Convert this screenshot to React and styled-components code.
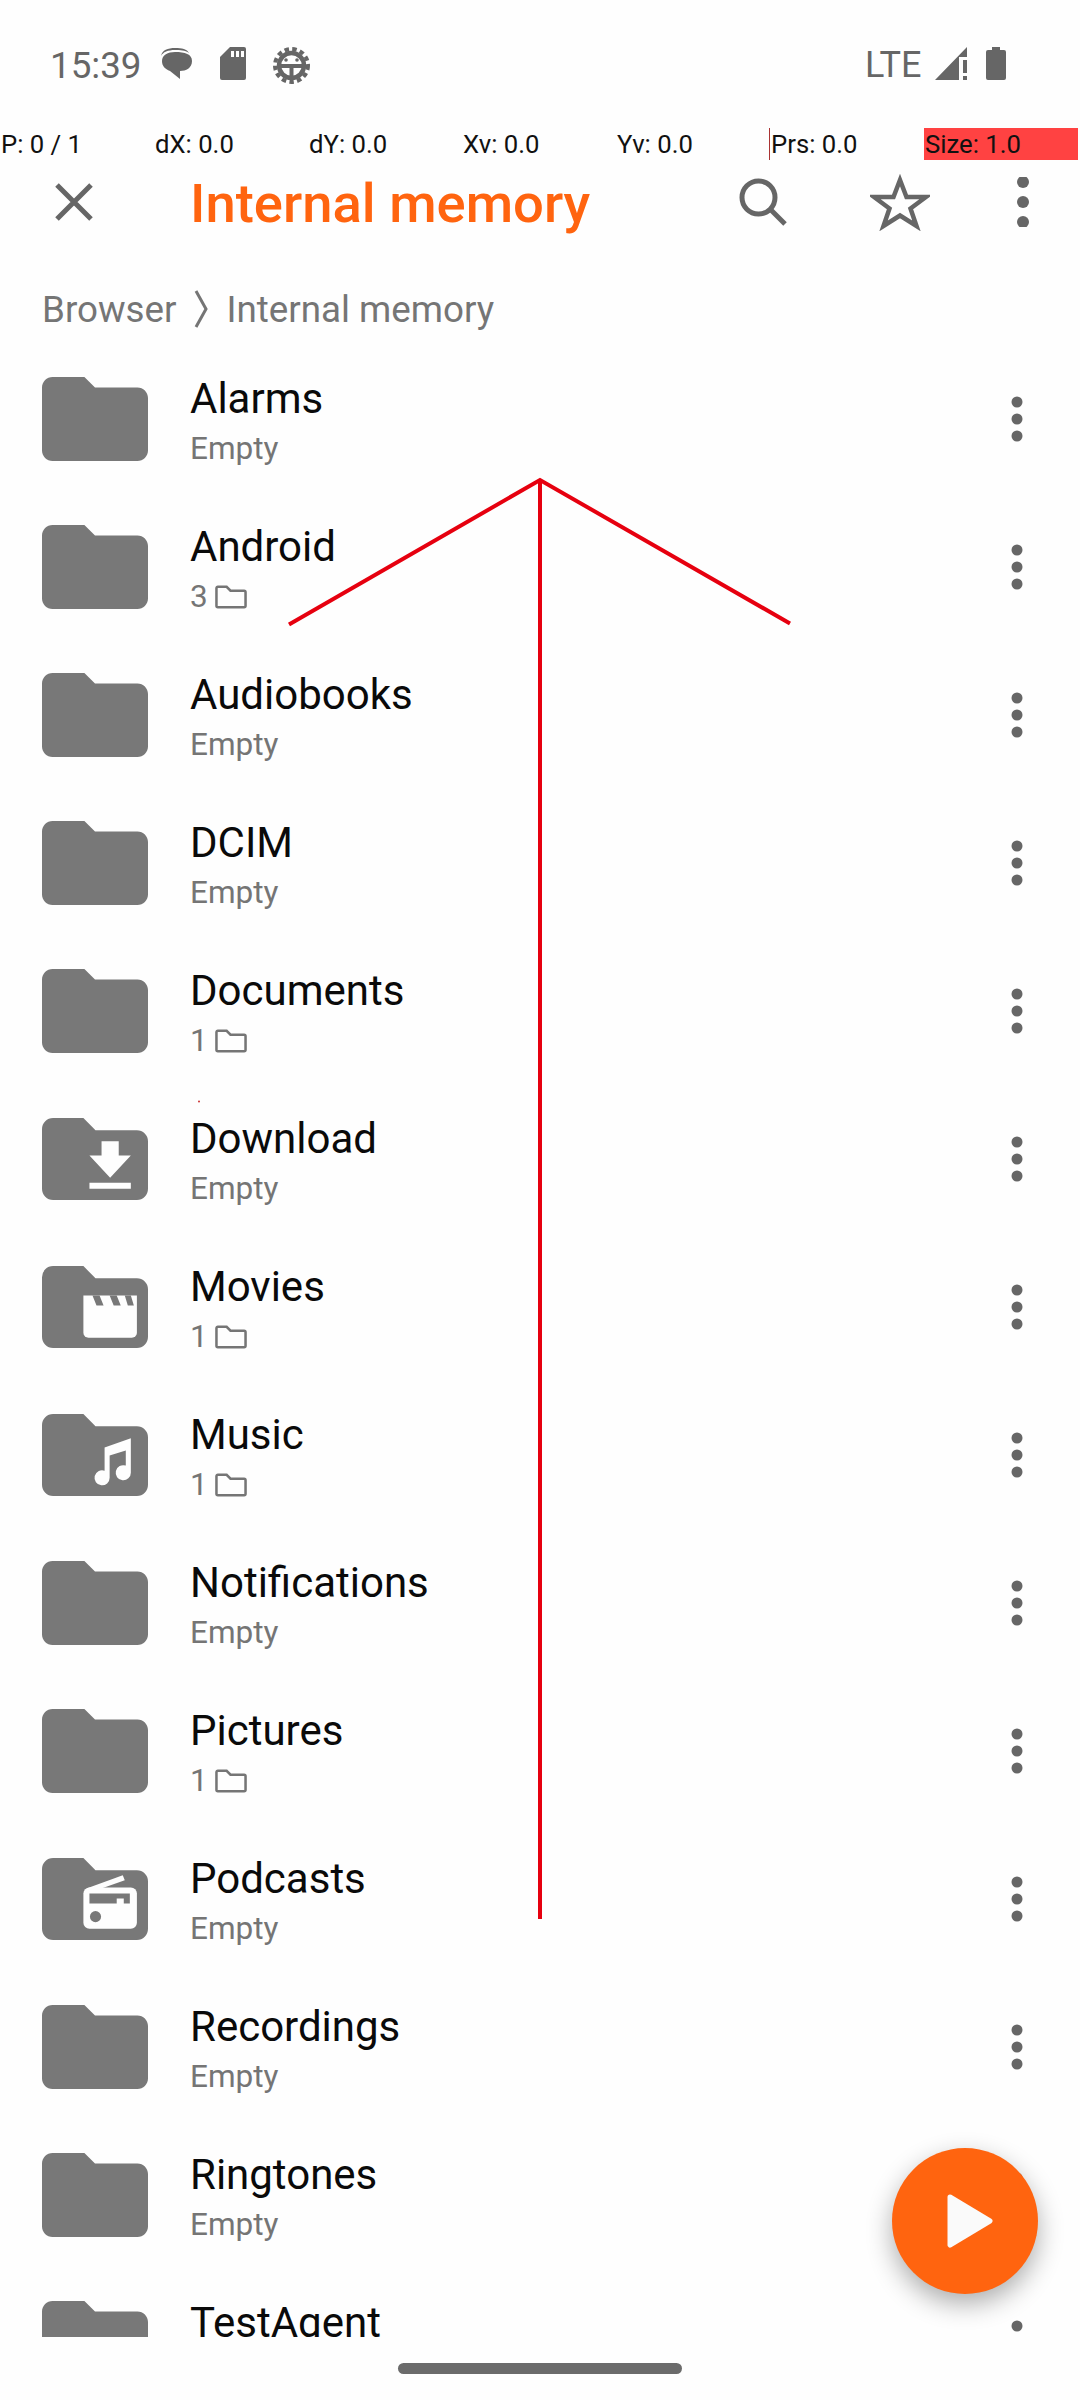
import React from 'react';
import styled, { createGlobalStyle } from 'styled-components';

const GRAY = '#757575';
const ICON = '#666666';
const ORANGE = '#ff640f';

const Global = createGlobalStyle`
    html, body { margin: 0; padding: 0; background: #fefefe; }
    * { box-sizing: border-box; }
`;

const Screen = styled.div`
    position: relative;
    width: 1080px;
    height: 2400px;
    overflow: hidden;
    background: #fefefe;
    font-family: Roboto, "Liberation Sans", sans-serif;
`;

const StatusBar = styled.div`
    height: 128px;
    display: flex;
    align-items: flex-start;
    padding: 47px 74px 0 50px;
    color: ${ICON};
`;

const Time = styled.div`
    font-size: 36.75px;
    line-height: 38px;
    width: 110px;
`;

const StatusIcon = styled.svg`
    display: block;
    margin-right: ${({ $gap }) => $gap || 0}px;
    flex: none;
`;

const Spacer = styled.div`
    flex: 1;
`;

const Lte = styled.div`
    font-size: 36px;
    line-height: 36px;
    width: 70px;
`;

const PointerBar = styled.div`
    position: absolute;
    top: 128px;
    left: 0;
    width: 1080px;
    height: 32px;
    display: flex;
`;

const PointerCell = styled.div`
    width: 154px;
    height: 32px;
    padding-left: 1px;
    font-size: 25.7px;
    line-height: 32px;
    color: #111;
    white-space: nowrap;
    background: ${({ $alert }) => ($alert ? '#ff4242' : 'transparent')};
`;

const Toolbar = styled.div`
    height: 148px;
    display: flex;
    align-items: center;
    position: relative;
`;

const CloseButton = styled.div`
    width: 190px;
    padding-left: 55px;
    display: flex;
`;

const Title = styled.div`
    flex: 1;
    padding-top: 2px;
    font-size: 54.4px;
    font-weight: 500;
    color: ${ORANGE};
    white-space: nowrap;
`;

const ToolIcon = styled.svg`
    display: block;
    flex: none;
    margin-right: ${({ $gap }) => $gap}px;
`;

const Breadcrumb = styled.div`
    height: 69px;
    display: flex;
    align-items: center;
    padding-left: 42px;
    padding-bottom: 3px;
    font-size: 36.75px;
    color: ${GRAY};
`;

const Chevron = styled.svg`
    display: block;
    margin: 0 18px 0 18px;
`;

const ListArea = styled.div`
    position: relative;
    height: 1992px;
    overflow: hidden;
`;

const Row = styled.div`
    height: 148px;
    display: flex;
    align-items: center;
    padding-left: 42px;
`;

const IconSlot = styled.div`
    width: 148px;
    flex: none;
`;

const RowText = styled.div`
    flex: 1;
    display: flex;
    flex-direction: column;
    height: 100%;
    padding-top: 28px;
`;

const RowTitle = styled.div`
    font-size: 42px;
    line-height: 52px;
    color: #0a0a0a;
`;

const RowSub = styled.div`
    display: flex;
    align-items: center;
    gap: 7px;
    margin-top: 2px;
    font-size: 31.5px;
    line-height: 44px;
    color: ${GRAY};
`;

const MoreIcon = styled.svg`
    display: block;
    flex: none;
    margin-right: ${({ $right }) => $right}px;
`;

const Fab = styled.div`
    position: absolute;
    left: 892px;
    top: 1803px;
    width: 146px;
    height: 146px;
    padding-left: 10px;
    border-radius: 50%;
    background: ${ORANGE};
    box-shadow: 0 10px 26px rgba(0, 0, 0, 0.32);
    display: flex;
    align-items: center;
    justify-content: center;
`;

const NavArea = styled.div`
    height: 63px;
    display: flex;
    justify-content: center;
    padding-top: 26px;
`;

const NavPill = styled.div`
    width: 284px;
    height: 11px;
    border-radius: 6px;
    background: #6b6b6b;
`;

const TraceLayer = styled.svg`
    position: absolute;
    left: 0;
    top: 0;
    pointer-events: none;
`;

const GlyphSvg = styled.svg`
    display: block;
`;

const FolderBody = ({ children }) => (
    <GlyphSvg width="106" height="82" viewBox="0 0 105 81">
        <path d="M11 0H41L53 12H94A11 11 0 0 1 105 23V70A11 11 0 0 1 94 81H11A11 11 0 0 1 0 70V11A11 11 0 0 1 11 0Z" fill="#787878" />
        {children}
    </GlyphSvg>
);

const PlainFolder = () => (
    <GlyphSvg width="106" height="84" viewBox="2 4 20 16" preserveAspectRatio="none">
        <path d="M10 4H4c-1.1 0-2 .9-2 2v12c0 1.1.9 2 2 2h16c1.1 0 2-.9 2-2V8c0-1.1-.9-2-2-2h-8l-2-2z" fill="#787878" />
    </GlyphSvg>
);

const glyphs = {
    download: (
        <path d="M59 23H76V37H88L67.5 59L47 37H59ZM47 64H88V70H47Z" fill="#fefefe" />
    ),
    movies: (
        <>
            <path d="M41 29H94V66A5 5 0 0 1 89 71H46A5 5 0 0 1 41 66Z" fill="#fefefe" />
            <path d="M50 29H57L61 39H54ZM67 29H74L78 39H71ZM82 29H88L91 39H85Z" fill="#787878" />
        </>
    ),
    music: (
        <path d="M62 33L88 24V58A7.5 7.5 0 1 1 83 51V36L67 41V63A7.5 7.5 0 1 1 62 56Z" fill="#fefefe" />
    ),
    radio: (
        <>
            <path d="M44 30L80 17L82 22L56 31Z" fill="#fefefe" />
            <rect x="41" y="29" width="53" height="41" rx="6" fill="#fefefe" />
            <path d="M47 35H87V45H81V40H74V45H47Z" fill="#787878" />
            <circle cx="53" cy="58" r="5.5" fill="#787878" />
        </>
    ),
};

const FolderIcon = ({ kind }) => (kind ? <FolderBody>{glyphs[kind]}</FolderBody> : <PlainFolder />);

const SmallFolder = () => (
    <svg width="32" height="24" viewBox="0 0 33 24">
        <path d="M3 1.5H12L16 5.5H30A1.5 1.5 0 0 1 31.5 7V21A1.5 1.5 0 0 1 30 22.5H3A1.5 1.5 0 0 1 1.5 21V3A1.5 1.5 0 0 1 3 1.5Z" fill="none" stroke={GRAY} strokeWidth="2.6" />
    </svg>
);

const Dots = ({ r = 5.5, gap = 17, right = 56 }) => (
    <MoreIcon width="14" height="50" viewBox="0 0 14 50" $right={right}>
        <circle cx="7" cy={25 - gap} r={r} fill={ICON} />
        <circle cx="7" cy="25" r={r} fill={ICON} />
        <circle cx="7" cy={25 + gap} r={r} fill={ICON} />
    </MoreIcon>
);

const pointerCells = ['P: 0 / 1', 'dX: 0.0', 'dY: 0.0', 'Xv: 0.0', 'Yv: 0.0', 'Prs: 0.0', 'Size: 1.0'];

const folders = [
    { name: 'Alarms' },
    { name: 'Android', count: 3 },
    { name: 'Audiobooks' },
    { name: 'DCIM' },
    { name: 'Documents', count: 1 },
    { name: 'Download', kind: 'download' },
    { name: 'Movies', count: 1, kind: 'movies' },
    { name: 'Music', count: 1, kind: 'music' },
    { name: 'Notifications' },
    { name: 'Pictures', count: 1 },
    { name: 'Podcasts', kind: 'radio' },
    { name: 'Recordings' },
    { name: 'Ringtones' },
    { name: 'TestAgent', clipped: true },
];

const App = () => (
    <Screen>
        <Global />
        <StatusBar>
            <Time>15:39</Time>
            <StatusIcon width="32" height="33" viewBox="0 0 32 33" $gap={28}>
                <path d="M1 9C2 3 8 1 15 1C22 1 27 2 29 6C25 3 20 3 15 3C8 3 3 5 1 9Z" fill={ICON} />
                <path d="M15 5C25 5 32 7 32 14C32 21 26 24 20 24V32L10 24C5 22 2 19 2 14C2 8 8 5 15 5Z" fill={ICON} />
            </StatusIcon>
            <StatusIcon width="26" height="33" viewBox="0 0 26 33" $gap={27}>
                <path d="M10 0H24A2 2 0 0 1 26 2V31A2 2 0 0 1 24 33H2A2 2 0 0 1 0 31V10Z" fill={ICON} />
                <path d="M11 4H14V10H11ZM16 4H19V10H16ZM21 4H24V10H21Z" fill="#fefefe" />
            </StatusIcon>
            <StatusIcon width="37" height="37" viewBox="0 0 37 37" $gap={0}>
                <circle cx="18.5" cy="18.5" r="16.5" fill="none" stroke={ICON} strokeWidth="4" strokeDasharray="4.5 3.3" />
                <circle cx="18.5" cy="18.5" r="12.5" fill="none" stroke={ICON} strokeWidth="4.5" />
                <path d="M6 17H31V21H20.5V31H16.5V21H6Z" fill={ICON} />
                <circle cx="13" cy="13" r="1.8" fill={ICON} />
                <circle cx="24" cy="13" r="1.8" fill={ICON} />
            </StatusIcon>
            <Spacer />
            <Lte>LTE</Lte>
            <StatusIcon width="32" height="33" viewBox="0 0 32 33" $gap={19}>
                <path d="M0 33L32 0V10H24V33Z" fill={ICON} />
                <path d="M28 13H32V26H28ZM28 29H32V33H28Z" fill={ICON} />
            </StatusIcon>
            <StatusIcon width="20" height="33" viewBox="0 0 20 33">
                <path d="M6 0H14V3H18A2 2 0 0 1 20 5V31A2 2 0 0 1 18 33H2A2 2 0 0 1 0 31V5A2 2 0 0 1 2 3H6Z" fill={ICON} />
            </StatusIcon>
        </StatusBar>

        <Toolbar>
            <CloseButton>
                <svg width="38" height="38" viewBox="0 0 38 38">
                    <path d="M2 2L36 36M36 2L2 36" stroke={ICON} strokeWidth="5" fill="none" />
                </svg>
            </CloseButton>
            <Title>Internal memory</Title>
            <ToolIcon width="48" height="48" viewBox="0 0 48 48" $gap={83}>
                <circle cx="19.5" cy="19.5" r="16.5" fill="none" stroke={ICON} strokeWidth="5" />
                <path d="M31 31L46 46" stroke={ICON} strokeWidth="5" fill="none" />
            </ToolIcon>
            <ToolIcon width="60" height="57" viewBox="0 0 60 57" $gap={86}>
                <path d="M30 6L36.5 23H56L40.5 34.5L46.5 52L30 41.5L13.5 52L19.5 34.5L4 23H23.5Z" fill="none" stroke={ICON} strokeWidth="4.5" />
            </ToolIcon>
            <Dots r={6} gap={20} right={50} />
        </Toolbar>

        <Breadcrumb>
            Browser
            <Chevron width="14" height="38" viewBox="0 0 14 38">
                <path d="M2 1L12 19L2 37" fill="none" stroke={GRAY} strokeWidth="3" />
            </Chevron>
            Internal memory
        </Breadcrumb>

        <ListArea>
            {folders.map((f) => (
                <Row key={f.name}>
                    <IconSlot>
                        <FolderIcon kind={f.kind} />
                    </IconSlot>
                    <RowText>
                        <RowTitle>{f.name}</RowTitle>
                        {!f.clipped && (
                            <RowSub>
                                {f.count ? <>{f.count} <SmallFolder /></> : 'Empty'}
                            </RowSub>
                        )}
                    </RowText>
                    <Dots />
                </Row>
            ))}
            <Fab>
                <svg width="46" height="54" viewBox="0 0 46 54">
                    <path d="M3 3L43 27L3 51Z" fill="#fafafa" stroke="#fafafa" strokeWidth="5" strokeLinejoin="round" />
                </svg>
            </Fab>
        </ListArea>

        <NavArea>
            <NavPill />
        </NavArea>

        <PointerBar>
            {pointerCells.map((c, i) => (
                <PointerCell key={c} $alert={i === 6}>{c}</PointerCell>
            ))}
        </PointerBar>

        <TraceLayer width="1080" height="2400" viewBox="0 0 1080 2400">
            <path d="M769.5 128V160" stroke="#a33" strokeWidth="1" fill="none" />
            <path d="M289 624.5L540 480L790 623.5M540 480V1919" stroke="#e6000f" strokeWidth="4" fill="none" />
            <circle cx="199" cy="1101.5" r="1" fill="#c33" />
        </TraceLayer>
    </Screen>
);

export default App;
